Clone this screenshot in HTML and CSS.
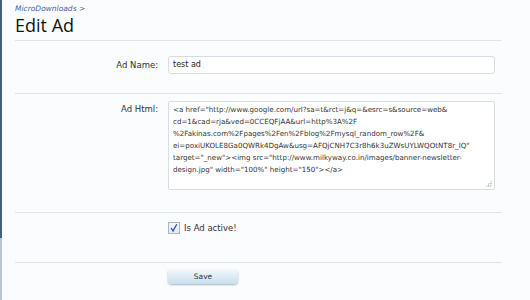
FILE: index.html
```html
<!DOCTYPE html>
<html lang="en">
  <head>
    <meta charset="UTF-8" />
    <title>Edit Ad</title>
    <link rel="stylesheet" href="styles.css">
  </head>
  <body>
    <div class="page">
      <div class="crumbs"><a href="#">MicroDownloads</a> &gt;</div>
      <h1>Edit Ad</h1>

      <!-- Name -->
      <div class="row row-name">
        <label class="label">Ad Name:</label>
        <div class="field"><div class="input">test ad</div></div>
      </div>

      <!-- Html -->
      <div class="row row-html">
        <label class="label">Ad Html:</label>
        <div class="field">
          <div class="textarea">&lt;a href="http://www.google.com/url?sa=t&amp;rct=j&amp;q=&amp;esrc=s&amp;source=web&amp;<br>cd=1&amp;cad=rja&amp;ved=0CCEQFjAA&amp;url=http%3A%2F<br>%2Fakinas.com%2Fpages%2Fen%2Fblog%2Fmysql_random_row%2F&amp;<br>ei=poxiUKOLE8Ga0QWRk4DgAw&amp;usg=AFQjCNH7C3r8h6k3uZWsUYLWQOtNT8r_lQ"<br>target="_new"&gt;&lt;img src="http://www.milkyway.co.in/images/banner-newsletter-<br>design.jpg" width="100%" height="150"&gt;&lt;/a&gt;<span class="grip"></span></div>
        </div>
      </div>

      <!-- Active -->
      <div class="row row-check">
        <div class="label"></div>
        <div class="field check">
          <span class="box">
            <svg width="10" height="10" viewBox="0 0 10 10"><path d="M2.2 5 L4 8 L7.8 1.2" fill="none" stroke="#2b4fa8" stroke-width="1.3"/></svg>
          </span>
          <span>Is Ad active!</span>
        </div>
      </div>

      <!-- Save -->
      <div class="row row-save">
        <div class="label"></div>
        <div class="field"><button class="btn">Save</button></div>
      </div>
    </div>
  </body>
</html>
```

FILE: styles.css
```css
* {
  margin: 0;
  padding: 0;
  box-sizing: border-box;
}

html,
body {
  height: 100%;
}

body {
  background:
    linear-gradient(#42607a, #42607a) 0 0 / 2px 238px no-repeat,
    linear-gradient(#b9c5d1, #b9c5d1) 0 238px / 2px 100% no-repeat,
    #fbfcfe;
  font-family: "DejaVu Sans", Verdana, sans-serif;
  color: #333;
  overflow: hidden;
}

.page {
  padding: 0 15px;
  width: 517px;
}

/* Title */
.crumbs {
  padding-top: 4px;
  font-size: 7.5px;
  color: #5a6f88;
  height: 14px;
}

.crumbs a {
  color: #3f62a0;
  text-decoration: none;
  font-style: italic;
}

h1 {
  font-family: "Open Sans", sans-serif;
  font-weight: normal;
  font-size: 18px;
  color: #111;
  height: 27px;
  line-height: 23px;
  border-bottom: 1px solid #dde6ec;
}

/* Rows */
.row {
  display: flex;
  border-bottom: 1px solid #dde6ec;
}

.label {
  width: 143px;
  text-align: right;
  font-size: 8.5px;
  color: #333;
  flex-shrink: 0;
}

.field {
  margin-left: 10px;
  width: 327px;
}

.row-name {
  height: 53px;
  padding-top: 15px;
}

.row-name .label {
  padding-top: 4px;
}

.input {
  height: 18px;
  border: 1px solid #d6dde4;
  border-radius: 3px;
  background: #fff;
  font-size: 8px;
  padding: 3px 4px;
  color: #222;
}

.row-html {
  height: 119px;
  padding-top: 7px;
}

.row-html .label {
  padding-top: 3px;
}

.textarea {
  position: relative;
  height: 89px;
  border: 1px solid #d6dde4;
  border-radius: 2px;
  background: #fff;
  font-size: 7.1px;
  line-height: 12.1px;
  padding: 2px 4px;
  color: #333;
  white-space: nowrap;
}

.grip {
  position: absolute;
  right: 2px;
  bottom: 2px;
  width: 7px;
  height: 7px;
  background: radial-gradient(circle, #aaa 0.7px, transparent 0.9px) 0 0 / 2.4px 2.4px;
  clip-path: polygon(100% 0, 100% 100%, 0 100%);
}

.row-check {
  height: 50px;
  padding-top: 9px;
}

.check {
  display: flex;
  align-items: center;
  gap: 4px;
  font-size: 8.5px;
  color: #333;
  height: 12px;
}

.box {
  width: 12px;
  height: 12px;
  border: 1px solid #aab6c4;
  background: linear-gradient(#f4f6fa, #e4e9f0);
  display: flex;
  align-items: center;
  justify-content: center;
}

.row-save {
  border-bottom: none;
  padding-top: 1px;
}

.btn {
  width: 70px;
  height: 15px;
  border: none;
  border-radius: 4px;
  background: linear-gradient(#f2f8fc, #c9dfee);
  box-shadow: 0 1px 2px rgba(60, 90, 120, 0.45);
  font-family: "DejaVu Sans", Verdana, sans-serif;
  font-size: 7.5px;
  color: #333;
}
```
